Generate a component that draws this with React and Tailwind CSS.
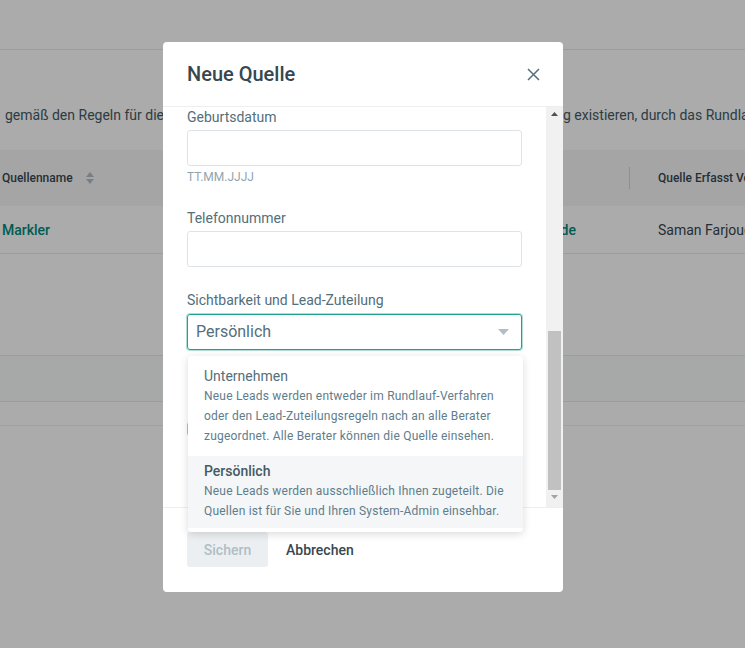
import React from "react";

const Label = ({ children }) => (
  <div className="h-5 text-sm leading-5 text-[#546e7a]">{children}</div>
);

const Input = () => (
  <div className="mt-[3px] h-9 w-full rounded-[3px] border border-[#dde3e7] bg-white" />
);

export default function App() {
  return (
    <div className="relative h-[648px] w-full overflow-hidden bg-white font-['Roboto',sans-serif]">
      {/* page behind the dialog */}
      <div className="h-[50px] border-b border-[#e6e9eb]" />
      <div className="flex h-[100px] items-start overflow-hidden whitespace-nowrap pt-[55px] text-sm leading-5 text-[#455a64]">
        <div className="w-[563px] shrink-0 overflow-hidden pl-[5px]">
          gemäß den Regeln für die Lead-Zuteilung, sofern für diese Quelle solche Regeln zur Zuteilung
        </div>
        <div className="shrink-0">g existieren, durch das Rundlauf-Verfahren zugeordnet.</div>
      </div>
      <div className="flex h-14 items-center overflow-hidden whitespace-nowrap bg-[#f6f7f8] text-xs font-medium text-[#37474f]">
        <div className="flex w-[629px] shrink-0 items-center pl-[2px]">
          <span>Quellenname</span>
          <svg className="ml-[13px]" width="8" height="12" viewBox="0 0 8 12">
            <path d="M4 0L8 5H0Z" fill="#b0bec5" />
            <path d="M4 12L8 7H0Z" fill="#b0bec5" />
          </svg>
        </div>
        <div className="h-[22px] w-px shrink-0 bg-[#cfd8dc]" />
        <div className="shrink-0 pl-7">Quelle Erfasst Von</div>
      </div>
      <div className="flex h-12 items-center overflow-hidden whitespace-nowrap border-b border-[#e6e9eb] text-sm">
        <div className="flex w-[576px] shrink-0 justify-between pl-[2px] font-medium text-[#00897b]">
          <span>Markler</span>
          <span>Empfehlung Kunde</span>
        </div>
        <div className="shrink-0 pl-[82px] text-[#37474f]">Saman Farjoudi</div>
      </div>
      <div className="mt-[101px] h-[47px] border-y border-[#e6e9eb] bg-[#fafbfb]" />
      <div className="h-6 border-b border-[#eceff1]" />

      {/* overlay */}
      <div className="absolute inset-0 bg-black/[0.33]" />

      {/* dialog */}
      <div className="absolute left-[163px] top-[42px] flex h-[550px] w-[400px] flex-col rounded bg-white">
        <div className="flex h-[65px] shrink-0 items-center justify-between border-b border-[#eceff1] px-6">
          <h2 className="text-xl font-medium text-[#37474f]">Neue Quelle</h2>
          <svg width="15" height="15" viewBox="0 0 15 15" className="mr-[-2px]">
            <path d="M2 2L13 13M13 2L2 13" stroke="#546e7a" strokeWidth="1.5" />
          </svg>
        </div>

        <div className="flex h-[400px] shrink-0">
          <div className="flex-1 overflow-hidden px-6">
            <Label>Geburtsdatum</Label>
            <Input />
            <div className="mt-[3px] text-xs leading-4 text-[#90a4ae]">TT.MM.JJJJ</div>
            <div className="mt-[23px]">
              <Label>Telefonnummer</Label>
            </div>
            <Input />
            <div className="mt-[23px]">
              <Label>Sichtbarkeit und Lead-Zuteilung</Label>
            </div>
            <div className="mt-1 flex h-9 items-center justify-between rounded-[3px] border border-[#1ea18d] pl-2 pr-3 shadow-[0_0_0_1px_rgba(30,161,141,0.35)]">
              <span className="text-base text-[#546e7a]">Persönlich</span>
              <svg width="11" height="6" viewBox="0 0 11 6">
                <path d="M0 0H11L5.5 6Z" fill="#b0bec5" />
              </svg>
            </div>
            <div className="mt-[71px] h-4 w-4 rounded-sm border border-[#b0bec5]" />
          </div>
          <div className="relative flex w-[17px] flex-col items-center bg-[#f1f1f1]">
            <svg className="mt-[5px]" width="7" height="4" viewBox="0 0 7 4">
              <path d="M3.5 0L7 4H0Z" fill="#505050" />
            </svg>
            <div className="mt-[215px] h-[159px] w-[13px] bg-[#c1c1c1]" />
            <svg className="mt-[5px]" width="7" height="4" viewBox="0 0 7 4">
              <path d="M0 0H7L3.5 4Z" fill="#a3a3a3" />
            </svg>
          </div>
        </div>

        <div className="flex flex-1 items-start gap-[18px] border-t border-[#eceff1] px-6 pt-6">
          <button className="h-[35px] w-[81px] rounded-[3px] bg-[#eceff1] text-sm font-medium text-[#b0bec5]">
            Sichern
          </button>
          <button className="h-[35px] text-sm font-medium text-[#37474f]">Abbrechen</button>
        </div>

        {/* open select menu */}
        <div className="absolute left-[25px] top-[314px] w-[335px] rounded bg-white pb-1 pt-[2px] shadow-[0_2px_8px_rgba(0,0,0,0.15)]">
          <div className="px-4 pb-2.5 pt-2">
            <div className="text-sm leading-5 text-[#546e7a]">Unternehmen</div>
            <div className="text-xs leading-5 tracking-[0.2px] text-[#607d8b]">
              Neue Leads werden entweder im Rundlauf-Verfahren oder den Lead-Zuteilungsregeln nach an alle Berater zugeordnet. Alle Berater können die Quelle einsehen.
            </div>
          </div>
          <div className="bg-[#f5f6f7] px-4 pb-[7px] pt-[5px]">
            <div className="text-sm font-medium leading-5 text-[#455a64]">Persönlich</div>
            <div className="text-xs leading-5 tracking-[0.2px] text-[#607d8b]">
              Neue Leads werden ausschließlich Ihnen zugeteilt. Die Quellen ist für Sie und Ihren System-Admin einsehbar.
            </div>
          </div>
        </div>
      </div>
    </div>
  );
}
